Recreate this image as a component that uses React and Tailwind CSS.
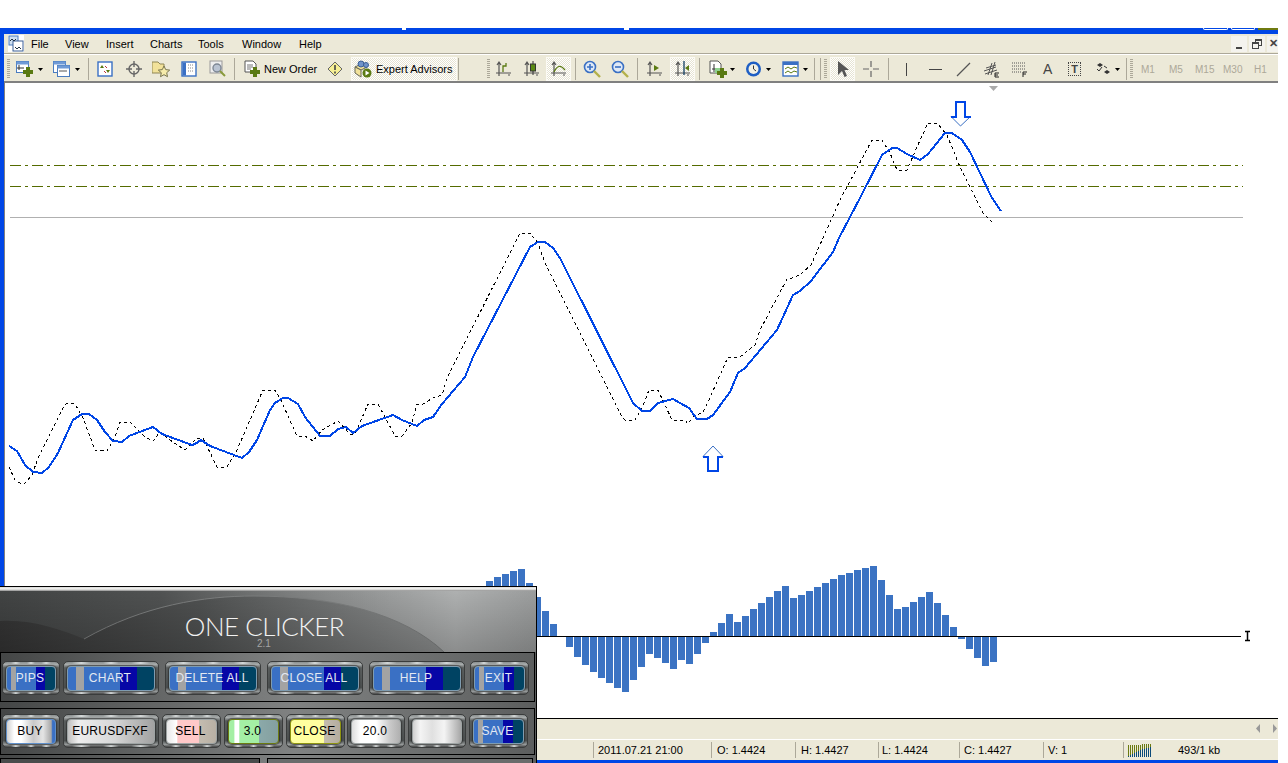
import React from "react";

const blueLine = [[9,446],[17,451],[25,465],[33,472],[42,473],[49,467],[58,453],[73,420],[82,414],[89,414],[97,420],[105,432],[113,441],[122,442],[129,436],[153,427],[162,434],[192,445],[195,444],[201,440],[210,446],[242,458],[249,452],[257,440],[270,410],[275,403],[283,398],[288,398],[298,404],[305,417],[320,436],[330,436],[338,429],[346,427],[353,433],[362,426],[393,415],[402,420],[417,426],[424,420],[433,417],[442,404],[465,377],[473,357],[530,247],[538,242],[545,242],[553,248],[560,258],[633,403],[642,411],[650,411],[658,403],[673,399],[680,403],[689,408],[697,419],[707,419],[713,415],[730,392],[738,373],[745,368],[777,330],[793,295],[800,291],[811,281],[833,252],[839,238],[860,198],[882,155],[892,148],[897,148],[907,154],[920,160],[928,154],[945,133],[952,133],[962,140],[970,152],[980,173],[992,198],[1001,211]];
const dashLine = [[9,467],[15,480],[20,483],[25,483],[32,475],[38,458],[63,408],[67,403],[75,404],[83,418],[95,450],[107,451],[115,437],[120,422],[130,422],[145,437],[153,441],[160,432],[170,440],[185,450],[197,438],[203,438],[217,467],[227,467],[237,450],[263,390],[275,390],[280,398],[297,436],[305,436],[313,441],[322,430],[338,421],[350,434],[355,434],[368,404],[378,404],[395,436],[402,436],[412,423],[417,404],[423,404],[433,398],[442,395],[447,378],[520,233],[530,233],[538,243],[545,263],[622,417],[625,420],[635,420],[642,408],[649,390],[658,390],[672,420],[685,420],[688,424],[693,417],[703,412],[708,402],[728,357],[740,357],[755,345],[760,330],[787,279],[792,278],[800,275],[811,265],[823,238],[840,200],[872,140],[882,140],[890,153],[897,170],[907,170],[917,147],[928,123],[937,123],[947,135],[960,167],[983,213],[992,222]];
const pts = (a) => a.map((p) => p.join(",")).join(" ");
const base = 636;
const upBars = [[486,581],[494,577],[502,574],[510,571],[518,569],[526,583],[534,597],[542,611],[550,624],[710,632],[718,623],[726,614],[734,622],[742,616],[750,609],[758,603],[766,597],[774,591],[782,586],[790,598],[798,595],[806,591],[814,587],[822,583],[830,579],[838,575],[846,573],[854,570],[862,568],[870,566],[878,580],[886,595],[894,609],[902,607],[910,602],[918,597],[926,592],[934,603],[942,615],[950,627]];
const downBars = [[566,647],[574,657],[582,665],[590,672],[598,678],[606,683],[614,688],[622,692],[630,680],[638,667],[646,654],[654,658],[662,663],[670,669],[678,660],[686,664],[694,654],[702,643],[958,639],[966,649],[974,658],[982,666],[990,662]];

const Grip = () => <div className="ml-[3px] h-[20px] w-[3px] shrink-0 bg-[repeating-linear-gradient(180deg,#aca899_0,#aca899_1px,#ece9d8_1px,#ece9d8_2px)]" />;
const Sep = ({ cls }) => <div className={`h-[22px] w-px shrink-0 bg-[#aca899] ${cls}`} />;
const Drop = ({ cls }) => <svg width="5" height="3" viewBox="0 0 5 3" className={`shrink-0 ${cls}`}><path d="M0 0h5L2.5 3z" fill="#000" /></svg>;
const pressedBg = "border border-[#fbfaf4] bg-[#f5f3ea] bg-[conic-gradient(#ffffff_25%,#e6e3d2_0_50%,#ffffff_0_75%,#e6e3d2_0)] bg-[length:2px_2px]";
const Pressed = ({ cls, children }) => <div className={`flex h-[24px] w-[25px] shrink-0 items-center justify-center ${pressedBg} ${cls}`}>{children}</div>;
const Axes = ({ children, w = 16 }) => (
  <svg width={w} height="18" viewBox="0 0 16 18" className="shrink-0">
    <path d="M3 2v14M0 13h15M1 5l2-3 2 3M12 15h2" stroke="#555" strokeWidth="1.2" fill="none" />
    {children}
  </svg>
);
const Win = ({ x = 1, y = 1, w = 14, h = 13 }) => (
  <g>
    <rect x={x} y={y} width={w} height={h} fill="#fff" stroke="#4a7cc0" />
    <rect x={x} y={y} width={w} height="3" fill="#6f9ad6" />
  </g>
);
const Plus = ({ x, y }) => <path d={`M${x + 3} ${y}h4v3h3v4h-3v3h-4v-3h-3v-4h3z`} fill="#5a7a12" />;

const labelBlue = "bg-[linear-gradient(90deg,#3a70c4_0,#3a70c4_9%,#a3a3a3_9%,#a3a3a3_19%,#3a70c4_19%,#3a70c4_60%,#0606a6_60%,#0606a6_80%,#004363_80%,#004363_100%)] text-[#e3e9f2] border-[#7f9cb0]";
const glint = "absolute left-[8px] right-[8px] h-[2px] bg-[linear-gradient(90deg,transparent_0,#d3d7d7_12%,transparent_24%,transparent_40%,#d3d7d7_50%,transparent_60%,transparent_76%,#d3d7d7_88%,transparent_100%)]";

const Btn = ({ w, ml, inner, children }) => (
  <div className={`relative flex h-[34px] shrink-0 items-center rounded-[5px] border border-[#3a3c3c] bg-[linear-gradient(180deg,#8b9090_0,#a8acac_8%,#5a5e5e_18%,#4b4f4f_80%,#989c9c_92%,#444_100%)] p-[3px] ${w} ${ml}`}>
    <div className={`${glint} top-0`} />
    <div className={`${glint} bottom-0`} />
    <div className={`relative flex h-[25px] w-full items-center justify-center rounded-[4px] border pr-[2px] text-[12px] leading-none tracking-[0.25px] shadow-[0_0_1px_1px_rgba(30,30,30,0.55)] ${inner}`}>{children}</div>
  </div>
);

export default function App() {
  const font = "font-['Liberation_Sans',sans-serif]";
  return (
    <div className={`relative h-[763px] w-[1288px] overflow-hidden bg-white text-[11px] text-black ${font}`}>
      <div className="h-[28px]" />
      <div className="relative flex h-[735px] w-[1278px] flex-col border-t-[6px] border-b-[4px] border-l-[4px] border-[#0046e6] bg-[#ece9d8]">
        {/* caption leftovers */}
        <div className="absolute -top-[6px] left-[398px] h-[2px] w-[4px] bg-white" />
        <div className="absolute -top-[6px] left-[620px] h-[2px] w-[5px] bg-white" />
        <div className="absolute -top-[6px] left-[1199px] h-[2px] w-[25px] rounded-b-[2px] border-x border-b border-white" />
        <div className="absolute -top-[6px] left-[1227px] h-[2px] w-[24px] rounded-b-[2px] border-x border-b border-white" />
        <div className="absolute -top-[6px] left-[1254px] h-[2px] w-[20px] bg-[#6f7a10]" />

        {/* menu */}
        <div className="flex h-[19px] shrink-0 items-center">
          <svg width="16" height="17" viewBox="0 0 16 17" className="ml-[4px] shrink-0">
            <rect width="16" height="17" fill="#fff" />
            <rect x="1" y="1" width="9" height="9" fill="#cfe0f2" stroke="#4a7cc0" />
            <rect x="5" y="6" width="10" height="10" fill="#fff" stroke="#3a5f96" />
            <path d="M2 6l2-2 2 2 2-2M7 12l2 2 2-2 2 2" stroke="#234" fill="none" />
          </svg>
          <span className="ml-[7px] w-[34px] pt-px">File</span>
          <span className="w-[41px] pt-px">View</span>
          <span className="w-[44px] pt-px">Insert</span>
          <span className="w-[48px] pt-px">Charts</span>
          <span className="w-[44px] pt-px">Tools</span>
          <span className="w-[57px] pt-px">Window</span>
          <span className="pt-px">Help</span>
          <div className="ml-auto flex h-[17px] items-center gap-[2px]">
            <div className="flex h-[16px] w-[16px] items-end justify-center bg-[#f4f3ee] pb-[3px]"><div className="h-[2px] w-[6px] bg-[#444]" /></div>
            <div className="relative h-[16px] w-[16px] bg-[#f4f3ee]">
              <div className="absolute left-[6px] top-[3px] h-[7px] w-[7px] border border-t-2 border-[#444]" />
              <div className="absolute left-[3px] top-[6px] h-[7px] w-[7px] border border-t-2 border-[#444] bg-[#f4f3ee]" />
            </div>
            <div className="flex h-[16px] w-[11px] items-center justify-end bg-[#f4f3ee] text-[11px] font-bold leading-none text-[#444]">✕</div>
          </div>
        </div>
        <div className="h-[2px] shrink-0 border-t border-[#aca899] bg-white" />

        {/* toolbar */}
        <div className="flex h-[26px] shrink-0 items-center pt-[2px]">
          <Grip />
          <svg width="18" height="18" viewBox="0 0 18 18" className="ml-[6px] shrink-0"><Win x={0.5} y={1.5} w={12} h={11} /><path d="M3 5v5M1 8h7" stroke="#333" /><Plus x={7} y={7} /></svg>
          <Drop cls="ml-[4px]" />
          <svg width="18" height="18" viewBox="0 0 18 18" className="ml-[10px] shrink-0"><Win x={0.5} y={1.5} w={12} h={11} /><Win x={4.5} y={5.5} w={12} h={11} /><path d="M6 11h8" stroke="#555" /></svg>
          <Drop cls="ml-[4px]" />
          <Sep cls="ml-[8px]" />
          <svg width="17" height="18" viewBox="0 0 17 18" className="ml-[8px] shrink-0"><rect x="1" y="2" width="14" height="14" fill="#fff" stroke="#3a70c4" strokeWidth="1.4" /><path d="M5 5l-2 3h4zM11 13l-2-3h4z" fill="#5a7a12" /><path d="M8 6l2 2M7 11l2 2" stroke="#b33" /></svg>
          <svg width="16" height="18" viewBox="0 0 16 18" className="ml-[12px] shrink-0"><circle cx="8" cy="9" r="5" fill="none" stroke="#666" strokeWidth="1.4" /><path d="M8 1v6M8 11v6M0 9h6M10 9h6" stroke="#666" strokeWidth="1.4" /></svg>
          <svg width="18" height="18" viewBox="0 0 18 18" className="ml-[10px] shrink-0"><path d="M0 2h6l2 2h4v9H0z" fill="#f2e29a" stroke="#8f8654" /><path d="M12 6l1.7 3.6 4 .5-3 2.6.8 4-3.5-2-3.5 2 .8-4-3-2.6 4-.5z" fill="#f6ecab" stroke="#77744f" /></svg>
          <svg width="16" height="18" viewBox="0 0 16 18" className="ml-[11px] shrink-0"><rect x="1" y="2" width="14" height="14" fill="#fff" stroke="#3a70c4" strokeWidth="1.4" /><rect x="1.5" y="2.5" width="3.5" height="13" fill="#3a70c4" /><path d="M7 5h6M7 8h6M7 11h6" stroke="#888" strokeDasharray="1 1" /></svg>
          <svg width="18" height="18" viewBox="0 0 18 18" className="ml-[12px] shrink-0"><rect x="1" y="1" width="12" height="12" fill="#eee" stroke="#999" /><circle cx="8" cy="8" r="4" fill="#b9c3d2" stroke="#7d8794" strokeWidth="1.4" /><path d="M11 11l5 5" stroke="#8a9a3a" strokeWidth="2" /></svg>
          <Sep cls="ml-[7px]" />
          <svg width="17" height="18" viewBox="0 0 17 18" className="ml-[9px] shrink-0"><path d="M1 1h8l3 3v8H1z" fill="#fff" stroke="#555" /><path d="M3 5h6M3 7h6M3 9h4" stroke="#777" /><Plus x={6} y={7} /></svg>
          <span className="ml-[3px] w-[53px] shrink-0 whitespace-nowrap">New Order</span>
          <svg width="16" height="16" viewBox="0 0 16 16" className="ml-[10px] shrink-0"><path d="M8 1l7 7-7 7-7-7z" fill="#f6ef94" stroke="#666" /><path d="M8 4v5M8 10.500v2" stroke="#444" strokeWidth="1.600" /></svg>
          <div className={`ml-[8px] flex h-[24px] w-[106px] shrink-0 items-center ${pressedBg}`}>
            <svg width="18" height="18" viewBox="0 0 18 18" className="ml-[2px] shrink-0"><path d="M1 7l6-3 6 3-6 3z" fill="#f2e29a" stroke="#665" /><path d="M1 7v6l6 4V10z" fill="#f2e29a" stroke="#665" /><circle cx="7" cy="4" r="3" fill="#6f93c9" stroke="#3a5f96" /><circle cx="12" cy="5" r="2.500" fill="#6f93c9" stroke="#3a5f96" /><circle cx="13" cy="13" r="4.500" fill="#5a7a12" /><path d="M11.500 10.500v5l4-2.500z" fill="#fff" /></svg>
            <span className="ml-[4px] whitespace-nowrap">Expert Advisors</span>
          </div>
          <Sep cls="ml-px" />
          <div className="ml-[25px]"><Grip /></div>
          <div className="ml-[6px]"><Axes><path d="M7 12V6h3V3" stroke="#5a7a12" strokeWidth="1.3" fill="none" /></Axes></div>
          <div className="ml-[12px]"><Axes><path d="M9 1v14" stroke="#333" /><rect x="6.500" y="4" width="5" height="7" fill="#5a8a12" stroke="#333" /></Axes></div>
          <Pressed cls="ml-[6px]"><Axes><path d="M3 12C6 6 9 4 14 10" stroke="#5a7a12" strokeWidth="1.3" fill="none" /></Axes></Pressed>
          <Sep cls="ml-[4px]" />
          <svg width="18" height="18" viewBox="0 0 18 18" className="ml-[7px] shrink-0"><circle cx="7" cy="7" r="5.500" fill="#dfe9f6" stroke="#3a70c4" strokeWidth="1.600" /><path d="M4 7h6M7 4v6" stroke="#3a70c4" strokeWidth="1.600" /><path d="M11 11l6 6" stroke="#b3b04a" strokeWidth="2.400" /></svg>
          <svg width="18" height="18" viewBox="0 0 18 18" className="ml-[10px] shrink-0"><circle cx="7" cy="7" r="5.500" fill="#dfe9f6" stroke="#3a70c4" strokeWidth="1.600" /><path d="M4 7h6" stroke="#3a70c4" strokeWidth="1.600" /><path d="M11 11l6 6" stroke="#b3b04a" strokeWidth="2.400" /></svg>
          <Sep cls="ml-[8px]" />
          <div className="ml-[9px]"><Axes><path d="M7 5l5 3-5 3z" fill="#5a7a12" /></Axes></div>
          <Pressed cls="ml-[7px]"><Axes><path d="M9 1v14" stroke="#123f63" strokeWidth="1.3" /><path d="M10 8l4-3v6z" fill="#5a7a12" /></Axes></Pressed>
          <Sep cls="ml-[4px]" />
          <svg width="18" height="18" viewBox="0 0 18 18" className="ml-[9px] shrink-0"><path d="M1 1h8l3 3v9H1z" fill="#fff" stroke="#555" /><path d="M5 4v8M3 9h5" stroke="#333" /><rect x="6" y="8" width="6" height="5" fill="#8fd18f" /><Plus x={8} y={8} /></svg>
          <Drop cls="ml-[3px]" />
          <svg width="17" height="18" viewBox="0 0 17 18" className="ml-[10px] shrink-0"><circle cx="8.500" cy="9" r="7.500" fill="#1f5fc4" /><circle cx="8.500" cy="9" r="5" fill="#f3f1e4" /><path d="M8.500 5.500V9l2.500 2" stroke="#333" fill="none" /></svg>
          <Drop cls="ml-[4px]" />
          <svg width="17" height="16" viewBox="0 0 17 16" className="ml-[11px] shrink-0"><rect x="1" y="1" width="15" height="14" fill="#fff" stroke="#3a70c4" strokeWidth="1.4" /><rect x="1" y="1" width="15" height="3" fill="#3a70c4" /><path d="M3 8l3-2 3 2 3-2 3 1" stroke="#5a7a12" fill="none" /><path d="M3 12l3-2 3 2 3-2 3 1" stroke="#5a7a12" fill="none" /></svg>
          <Drop cls="ml-[4px]" />
          <Sep cls="ml-[6px]" />
          <Sep cls="ml-[5px]" />
          <Grip />
          <Pressed cls="ml-[3px]"><svg width="12" height="18" viewBox="0 0 12 18"><path d="M1 1v14l4-4 2.500 6 2.500-1-2.500-6H12z" fill="#555" /></svg></Pressed>
          <svg width="16" height="16" viewBox="0 0 16 16" className="ml-[8px] shrink-0"><path d="M8 0v6M8 10v6M0 8h6M10 8h6" stroke="#666" strokeWidth="1.2" /></svg>
          <Sep cls="ml-[9px]" />
          <div className="ml-[17px] h-[13px] w-px shrink-0 bg-[#444]" />
          <div className="ml-[22px] h-px w-[13px] shrink-0 bg-[#444]" />
          <svg width="15" height="15" viewBox="0 0 15 15" className="ml-[14px] shrink-0"><path d="M1 14L14 1" stroke="#555" strokeWidth="1.2" /></svg>
          <svg width="17" height="18" viewBox="0 0 17 18" className="ml-[12px] shrink-0"><path d="M1 11l12-4M2 14l12-4M3 8l10-3M5 15L9 3M8 15l4-13" stroke="#555" fill="none" /><path d="M12 13h4M12 13v4h4M12 15h3" stroke="#222" fill="none" /></svg>
          <svg width="16" height="18" viewBox="0 0 16 18" className="ml-[12px] shrink-0"><path d="M0 3h14M0 6h14M0 9h14M0 12h9" stroke="#555" strokeDasharray="1 1" /><path d="M11 17v-5h4M11 14h3" stroke="#222" fill="none" /></svg>
          <span className="ml-[15px] w-[9px] shrink-0 text-[14px] leading-none text-[#444]">A</span>
          <div className="ml-[16px] flex h-[14px] w-[13px] shrink-0 items-center justify-center border border-dotted border-[#444] text-[11px] font-bold leading-none text-[#444]">T</div>
          <svg width="15" height="14" viewBox="0 0 15 14" className="ml-[15px] shrink-0"><path d="M1 3l3-2 3 2-3 2zM8 10l3-2 3 2-3 2z" fill="#333" /><path d="M1 7l2 2 3-4M8 4l3 2" stroke="#333" fill="none" /></svg>
          <Drop cls="ml-[4px]" />
          <Sep cls="ml-[6px]" />
          <Grip />
          {[["M1", "ml-[8px] w-[14px]"], ["M5", "ml-[14px] w-[13px]"], ["M15", "ml-[13px] w-[18px]"], ["M30", "ml-[10px] w-[18px]"], ["H1", "ml-[13px] w-[13px]"]].map(([t, c]) => (
            <span key={t} className={`shrink-0 whitespace-nowrap text-[10px] text-[#aca899] ${c}`}>{t}</span>
          ))}
        </div>
        <div className="h-[2px] shrink-0 bg-[#808080]" />

        {/* chart */}
        <div className="h-[635px] shrink-0 border-l border-[#808080] bg-white">
          <svg width="1273" height="635" viewBox="5 83 1273 635" className="block">
            <path d="M989 86h9l-4.500 5z" fill="#aaa" />
            <line x1="10" y1="217.500" x2="1243" y2="217.500" stroke="#b0b0b0" shapeRendering="crispEdges" />
            <line x1="10" y1="165.500" x2="1243" y2="165.500" stroke="#556b00" strokeDasharray="11 4 3 4" shapeRendering="crispEdges" />
            <line x1="10" y1="186.500" x2="1243" y2="186.500" stroke="#556b00" strokeDasharray="11 4 3 4" shapeRendering="crispEdges" />
            <polyline points={pts(dashLine)} fill="none" stroke="#000" strokeDasharray="3 3" shapeRendering="crispEdges" />
            <polyline points={pts(blueLine)} fill="none" stroke="#0046e6" strokeWidth="2" strokeLinejoin="round" shapeRendering="crispEdges" />
            <path d="M703 456.500L713 446l10 10.500" fill="none" stroke="#3a70c4" />
            <path d="M703 456.500h5V470.500h10V456.500h5" fill="none" stroke="#0046e6" strokeWidth="2" shapeRendering="crispEdges" />
            <path d="M951 116.500L960.500 126l10-9.500" fill="none" stroke="#3a70c4" />
            <path d="M951 116.500h5V101.500h9V116.500h6" fill="none" stroke="#0046e6" strokeWidth="2" shapeRendering="crispEdges" />
            {upBars.map(([x, t]) => <rect key={x} x={x} y={t} width="7" height={base - t} fill="#3b73c3" />)}
            {downBars.map(([x, b]) => <rect key={`d${x}`} x={x} y={base} width="7" height={b - base} fill="#3b73c3" />)}
            <rect x="537" y="636" width="704" height="1" fill="#000" />
            <path d="M1245 631.500h5M1245 640.500h5M1247.500 632v8" stroke="#000" strokeWidth="1.500" fill="none" />
          </svg>
        </div>

        {/* scroll band */}
        <div className="relative h-[21px] shrink-0 border-t border-black bg-[#ece9d8]">
          <svg width="5" height="9" viewBox="0 0 5 9" className="absolute left-[1252px] top-[5px]"><path d="M4 0v9L0 4.500z" fill="#999" /></svg>
          <svg width="5" height="9" viewBox="0 0 5 9" className="absolute left-[1269px] top-[5px]"><path d="M0 0v9l4-4.500z" fill="#999" /></svg>
        </div>
        {/* status */}
        <div className="flex h-[21px] shrink-0 items-center border-t border-white bg-[#ece9d8]">
          <div className="w-[589px] shrink-0" />
          {[["2011.07.21 21:00", "w-[118px] pl-[4px]"], ["O: 1.4424", "w-[84px] pl-[5px]"], ["H: 1.4427", "w-[83px] pl-[5px]"], ["L: 1.4424", "w-[81px] pl-[3px]"], ["C: 1.4427", "w-[84px] pl-[4px]"], ["V: 1", "w-[80px] pl-[4px]"]].map(([t, c]) => (
            <div key={t} className={`flex h-[16px] shrink-0 items-center border-l border-[#aca899] text-[11px] ${c}`}>{t}</div>
          ))}
          <div className="flex h-[16px] items-center border-l border-[#aca899] pl-[4px]">
            <svg width="24" height="13" viewBox="0 0 24 13" className="shrink-0">
              <path d="M.5 1v12M2.500 1v12M4.500 1v12M6.500 1v12M8.500 1v12M10.500 1v12M12.500 1v12M14.500 0v13M16.500 0v13M18.500 0v13M20.500 0v13M22.500 0v13" stroke="#6b7a10" />
              <path d="M.5 13v-1M2.500 13v-2M4.500 13v-3M6.500 13v-4M8.500 13v-5M10.500 13v-6M12.500 13v-7M14.500 13v-8M16.500 13v-8M18.500 13v-9M20.500 13v-9M22.500 13v-10" stroke="#0a4a7a" />
            </svg>
            <span className="ml-[26px] whitespace-nowrap">493/1 kb</span>
          </div>
        </div>
      </div>

      {/* One Clicker panel */}
      <div className="absolute bottom-0 left-0 flex h-[177px] w-[537px] flex-col border-t border-r border-black bg-[linear-gradient(90deg,#444646,#808282_55%,#5c5e5e)]">
        <div className="h-[4px] shrink-0 bg-[linear-gradient(180deg,#d9d9d9,#f5f5f2_50%,#8a8a8a)]" />
        <div className="relative h-[61px] shrink-0 overflow-hidden bg-[linear-gradient(90deg,#414343_0,#505252_30%,#8a8c8c_62%,#aeb0b0_85%,#9a9c9c_100%)]">
          <svg width="536" height="61" viewBox="0 0 536 61" className="absolute left-0 top-0">
            <defs>
              <linearGradient id="dome" x1="0" x2="1" y1="0" y2="0">
                <stop offset="0" stopColor="#343434" />
                <stop offset="0.45" stopColor="#4f5151" />
                <stop offset="1" stopColor="#8f9191" />
              </linearGradient>
              <linearGradient id="fade" x1="0" x2="0" y1="0" y2="1">
                <stop offset="0" stopColor="#000" stopOpacity="0" />
                <stop offset="1" stopColor="#000" stopOpacity="0.2" />
              </linearGradient>
            </defs>
            <path d="M0 30c30-2 60 8 84 18 60-34 120-43 170-43 80 0 150 18 190 56H0z" fill="url(#dome)" />
            <path d="M84 48c60-34 120-43 170-43 80 0 150 18 190 56" fill="none" stroke="#7c7e7e" />
            <rect width="536" height="61" fill="url(#fade)" />
          </svg>
          <div className="absolute left-0 right-0 top-[23px] pr-[7px] text-center font-['Lato',sans-serif] text-[26px] font-light leading-[24px] tracking-[-0.5px] text-[#f2f2f2]">ONE CLICKER</div>
          <div className="absolute left-[257px] top-[48px] text-[10px] leading-[10px] text-[#a5a5a5]">2.1</div>
        </div>

        <div className="flex h-[50px] w-[535px] shrink-0 items-start border border-black pl-px pt-[8px]">
          <Btn w="w-[58px]" inner={labelBlue}>PIPS</Btn>
          <Btn w="w-[96px]" ml="ml-[3px]" inner={labelBlue}>CHART</Btn>
          <Btn w="w-[96px]" ml="ml-[6px]" inner={labelBlue}>DELETE ALL</Btn>
          <Btn w="w-[96px]" ml="ml-[6px]" inner={labelBlue}>CLOSE ALL</Btn>
          <Btn w="w-[96px]" ml="ml-[6px]" inner={labelBlue}>HELP</Btn>
          <Btn w="w-[59px]" ml="ml-[5px]" inner={labelBlue}>EXIT</Btn>
        </div>
        <div className="h-[6px] shrink-0" />
        <div className="flex h-[47px] w-[535px] shrink-0 items-start border border-black pl-px pt-[5px]">
          <Btn w="w-[58px]" inner="border-[#5f8fc9] text-black bg-[linear-gradient(90deg,#cfcfcf_0,#ffffff_15%,#ffffff_30%,#c9c9c9_55%,#e4e4e4_75%,#a8a8a8_92%,#3a70c4_95%,#3a70c4_100%)]">BUY</Btn>
          <Btn w="w-[96px]" ml="ml-[3px]" inner="border-[#9da3a3] text-black bg-[linear-gradient(90deg,#c0c0c0_0,#eeeeee_12%,#d6d6d6_55%,#c2c2c2_70%,#a2a2a2_100%)]">EURUSDFXF</Btn>
          <Btn w="w-[59px]" ml="ml-[3px]" inner="border-[#9da3a3] text-black bg-[linear-gradient(90deg,#e8e8e8_0,#ffffff_20%,#ffc8c8_22%,#ffc8c8_65%,#c4bcb0_65%,#b8b0a4_100%)]">SELL</Btn>
          <Btn w="w-[59px]" ml="ml-[3px]" inner="border-[#6b7a10] text-black bg-[linear-gradient(90deg,#a4efa4_0,#a4efa4_10%,#ffffff_12%,#ffffff_20%,#a4efa4_22%,#a4efa4_62%,#8ba9a9_62%,#849f9f_100%)]">3.0</Btn>
          <Btn w="w-[59px]" ml="ml-[3px]" inner="border-[#8e9410] text-black bg-[linear-gradient(90deg,#ffff9f_0,#ffff9f_68%,#c4bcae_68%,#b4ac9f_100%)]">CLOSE</Btn>
          <Btn w="w-[58px]" ml="ml-[2px]" inner="border-[#9da3a3] text-black bg-[linear-gradient(90deg,#dddddd_0,#ffffff_18%,#ffffff_50%,#c8c8c8_80%,#b0b0b0_100%)]">20.0</Btn>
          <Btn w="w-[58px]" ml="ml-[3px]" inner="border-[#9da3a3] bg-[linear-gradient(90deg,#cfcfcf_0,#f4f4f4_15%,#e0e0e0_40%,#f4f4f4_65%,#bdbdbd_90%,#a6a6a6_100%)]"> </Btn>
          <Btn w="w-[59px]" ml="ml-[3px]" inner={labelBlue}>SAVE</Btn>
        </div>
        <div className="h-[3px] shrink-0" />
        <div className="flex flex-1 gap-[7px]">
          <div className="w-[260px] border-x border-t border-black bg-[#4a4c4c]" />
          <div className="w-[266px] border-x border-t border-black bg-[#6a6c6c]" />
        </div>
      </div>
    </div>
  );
}
